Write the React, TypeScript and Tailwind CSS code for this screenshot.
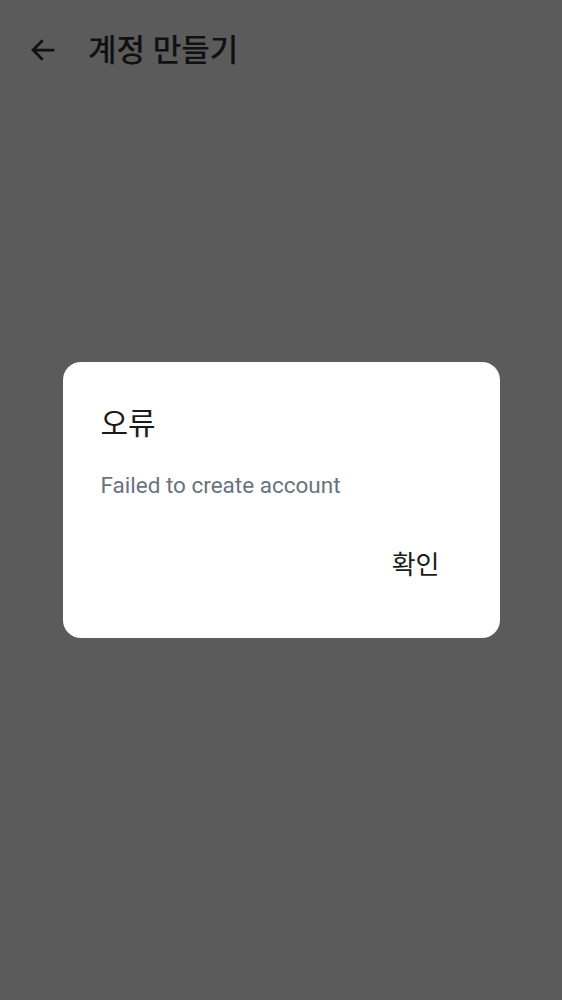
import React from "react";

const font = { fontFamily: '"Roboto", "Noto Sans CJK KR", sans-serif' };

export default function App() {
  return (
    <div
      className="relative w-full h-[1000px] bg-[#5b5b5b] overflow-hidden"
      style={font}
    >
      <div className="flex items-center h-[100px] pl-[28px]">
        <svg width="30" height="30" viewBox="0 0 24 24" className="text-[#111]">
          <path
            d="M20 12H4.5M11 5l-7 7 7 7"
            fill="none"
            stroke="currentColor"
            strokeWidth="2.2"
            strokeLinecap="square"
          />
        </svg>
        <div className="ml-[30px] text-[31px] font-medium text-[#111] leading-none">
          계정 만들기
        </div>
      </div>
      <div className="absolute inset-0 flex items-center justify-center">
        <div className="w-[437px] h-[276px] bg-white rounded-[18px] px-[38px] pt-[42px] flex flex-col">
          <div className="text-[30px] leading-[40px] text-[#1a1a1a]">오류</div>
          <div className="mt-[26px] text-[22.5px] leading-[30px] text-[#6b7280]">
            Failed to create account
          </div>
          <div className="flex justify-end mt-[48px]">
            <div className="text-[26px] leading-[34px] text-[#1a1a1a] pr-[22px]">확인</div>
          </div>
        </div>
      </div>
    </div>
  );
}
